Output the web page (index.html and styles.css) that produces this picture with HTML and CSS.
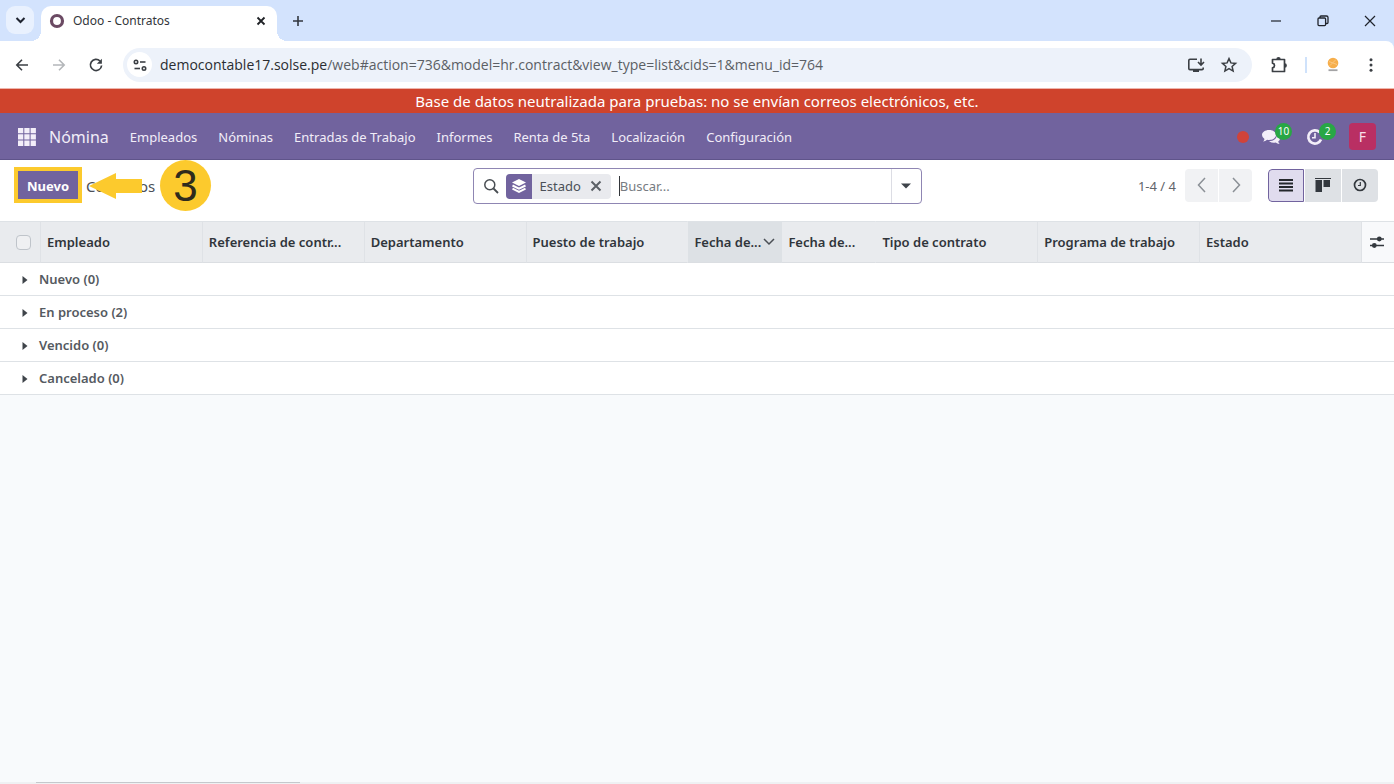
FILE: index.html
```html
<!DOCTYPE html>
<html lang="es">
<head>
<meta charset="utf-8">
<title>Odoo - Contratos</title>
<link rel="stylesheet" href="styles.css">
</head>
<body>
<div class="browser">
  <div class="tabstrip">
    <button class="tab-search" aria-label="Buscar pestañas"><svg width="28" height="28" viewBox="0 0 28 28"><path d="M10.500 12l4 4 4-4" fill="none" stroke="#1f2430" stroke-width="2"/></svg></button>
    <div class="tab">
      <svg width="16" height="16" viewBox="0 0 16 16"><circle cx="8" cy="8" r="5.500" fill="none" stroke="#6b4a63" stroke-width="3.200"/></svg>
      <span class="tab-title">Odoo - Contratos</span>
      <button class="icon-btn" aria-label="Cerrar pestaña"><svg width="16" height="16" viewBox="0 0 16 16"><path d="M4.500 4.500l7 7m0-7l-7 7" stroke="#1f2226" stroke-width="1.800"/></svg></button>
    </div>
    <button class="icon-btn new-tab" aria-label="Nueva pestaña"><svg width="16" height="16" viewBox="0 0 16 16"><path d="M8 3v10M3 8h10" stroke="#33373f" stroke-width="1.600"/></svg></button>
    <div class="window-controls">
      <button class="icon-btn" aria-label="Minimizar"><svg width="16" height="16" viewBox="0 0 16 16"><path d="M3 8h10" stroke="#20242c" stroke-width="1.200"/></svg></button>
      <button class="icon-btn" aria-label="Restaurar"><svg width="16" height="16" viewBox="0 0 16 16"><g fill="none" stroke="#20242c" stroke-width="1.300"><rect x="3" y="5" width="7.600" height="7.600" rx="1"/><path d="M5 5V4q0-1 1-1h5.500q1.500 0 1.500 1.500V9.500q0 1-1 1h-1"/></g></svg></button>
      <button class="icon-btn" aria-label="Cerrar"><svg width="16" height="16" viewBox="0 0 16 16"><path d="M3 3l10 10M13 3L3 13" stroke="#20242c" stroke-width="1.200"/></svg></button>
    </div>
  </div>
  <div class="toolbar">
    <button class="icon-btn" aria-label="Atrás"><svg width="16" height="16" viewBox="0 0 16 16"><path d="M14 8H3M8 2.800L2.800 8 8 13.200" fill="none" stroke="#3b3f44" stroke-width="1.600"/></svg></button>
    <button class="icon-btn" aria-label="Adelante"><svg width="16" height="16" viewBox="0 0 16 16"><path d="M2 8h11M8 2.800L13.200 8 8 13.200" fill="none" stroke="#b4b7ba" stroke-width="1.600"/></svg></button>
    <button class="icon-btn" aria-label="Recargar"><svg width="16" height="16" viewBox="0 0 16 16"><path d="M13.600 8.500A5.600 5.600 0 1 1 12 4" fill="none" stroke="#3b3f44" stroke-width="1.700"/><path d="M13.900 1.700v5.100H8.800z" fill="#3b3f44"/></svg></button>
    <div class="omnibox">
      <button class="site-info" aria-label="Información del sitio"><svg width="16" height="16" viewBox="0 0 16 16"><g fill="none" stroke="#3b3f44" stroke-width="1.600"><circle cx="4" cy="5" r="1.700"/><path d="M8 5h5.500"/><circle cx="12" cy="11.500" r="1.700"/><path d="M2.500 11.500H8"/></g></svg></button>
      <a class="url" href="#"><span class="host">democontable17.solse.pe</span>/web#action=736&amp;model=hr.contract&amp;view_type=list&amp;cids=1&amp;menu_id=764</a>
      <button class="icon-btn" aria-label="Instalar"><svg width="18" height="18" viewBox="0 0 18 18"><path d="M10 3.200H3q-1.200 0-1.200 1.200v8q0 1.200 1.200 1.200h12q1.200 0 1.200-1.200V11.500M14 2.500v6M11 6l3 3 3-3" fill="none" stroke="#3b3f44" stroke-width="1.600"/><path d="M6 14h6v2H6z" fill="#3b3f44"/></svg></button>
      <button class="icon-btn" aria-label="Favorito"><svg width="18" height="18" viewBox="0 0 18 18"><path d="M9 2.600l1.900 4.300 4.700.5-3.500 3.100 1 4.600L9 12.700l-4.100 2.400 1-4.600-3.500-3.100 4.700-.5z" fill="none" stroke="#3b3f44" stroke-width="1.500"/></svg></button>
    </div>
    <button class="icon-btn" aria-label="Extensiones"><svg width="18" height="18" viewBox="0 0 18 18"><path d="M2.500 3.500h12v12h-12v-3.700q2-.4 2-2.300t-2-2.300z" fill="none" stroke="#3b3f44" stroke-width="1.700" stroke-linejoin="round"/><path d="M6.300 3.300a2.200 2.200 0 0 1 4.400 0zM14.700 7.300a2.200 2.200 0 0 1 0 4.400z" fill="#3b3f44"/></svg></button>
    <span class="toolbar-sep"></span>
    <button class="icon-btn" aria-label="Perfil"><svg width="18" height="18" viewBox="0 0 18 18"><circle cx="9" cy="7" r="5.300" fill="#f6ae4b"/><path d="M5 5.500l8 3M6 9.500l6-6" stroke="#fbc77f"/><path d="M4.500 14.200h9" stroke="#a3a3a5" stroke-width="1.800"/></svg></button>
    <button class="icon-btn" aria-label="Menú"><svg width="16" height="16" viewBox="0 0 16 16"><g fill="#3b3f44"><circle cx="8" cy="2.700" r="1.500"/><circle cx="8" cy="8" r="1.500"/><circle cx="8" cy="13.300" r="1.500"/></g></svg></button>
  </div>
</div>

<div class="banner">Base de datos neutralizada para pruebas: no se envían correos electrónicos, etc.</div>

<header class="navbar">
  <button class="icon-btn apps" aria-label="Aplicaciones"><svg width="18" height="18" viewBox="0 0 18 18"><path fill="#f3eef9" d="M0 0h5.300v5.300H0zM6.300 0h5.300v5.300H6.300zM12.600 0h5.300v5.300h-5.300zM0 6.300h5.300v5.300H0zM6.300 6.300h5.300v5.300H6.300zM12.600 6.300h5.300v5.300h-5.300zM0 12.600h5.300v5.300H0zM6.300 12.600h5.300v5.300H6.300zM12.600 12.600h5.300v5.300h-5.300z"/></svg></button>
  <a class="brand" href="#">Nómina</a>
  <nav class="menu">
    <a href="#">Empleados</a><a href="#">Nóminas</a><a href="#">Entradas de Trabajo</a><a href="#">Informes</a><a href="#">Renta de 5ta</a><a href="#">Localización</a><a href="#">Configuración</a>
  </nav>
  <div class="systray">
    <span class="rec"></span>
    <button class="icon-btn tray" aria-label="Mensajes"><svg width="20" height="20" viewBox="0 0 20 20"><path fill="#f3eef9" d="M8 3c4 0 7 2.200 7 5s-3 5-7 5q-1 0-1.900-.2Q4.400 14.200 2 14.500q1.200-1 1.500-2.500Q1 10.400 1 8c0-2.800 3-5 7-5zM16.200 7.500Q19 9 19 11.500q0 1.800-1.800 3.100.3 1.400 1.500 2.400-2.600-.2-4-1.500-4.400.7-6.700-1.300 7.500-.2 8.200-6.700z"/></svg><span class="badge">10</span></button>
    <button class="icon-btn tray" aria-label="Actividades"><svg width="20" height="20" viewBox="0 0 20 20"><path d="M14.500 5.200A6.600 6.600 0 1 0 16 12.500" fill="none" stroke="#f3eef9" stroke-width="2.700"/><path d="M10 6v4.800H7" fill="none" stroke="#f3eef9" stroke-width="1.600"/></svg><span class="badge">2</span></button>
    <button class="avatar">F</button>
  </div>
</header>

<div class="control-panel">
  <div class="cp-left">
    <button class="btn-new">Nuevo</button>
    <span class="crumb">Contratos</span>
    <div class="callout">
      <svg width="53" height="26" viewBox="0 0 53 26"><path d="M0 13L27 0v6h26v14H27v6z" fill="#fcca2d"/></svg>
      <span class="step">3</span>
    </div>
  </div>
  <div class="search">
    <svg class="lens" width="16" height="16" viewBox="0 0 16 16"><circle cx="6.800" cy="6.800" r="5" fill="none" stroke="#484d52" stroke-width="1.500"/><path d="M10.500 10.500l4.500 4.500" stroke="#484d52" stroke-width="1.800"/></svg>
    <div class="facet">
      <span class="facet-icon"><svg width="16" height="16" viewBox="0 0 16 16"><path fill="#fff" d="M8 1l7 3.500L8 8 1 4.500z"/><path d="M1.500 7.500L8 10.700l6.500-3.200M1.500 10.700L8 13.900l6.500-3.200" fill="none" stroke="#fff" stroke-width="2"/></svg></span>
      <span>Estado</span>
      <button class="icon-btn" aria-label="Quitar"><svg width="14" height="14" viewBox="0 0 14 14"><path d="M2.500 2.500l9 9m0-9l-9 9" stroke="#5c6167" stroke-width="2"/></svg></button>
    </div>
    <label class="query"><input type="text" placeholder="Buscar..." aria-label="Buscar"></label>
    <button class="search-toggle" aria-label="Opciones de búsqueda"><svg width="10" height="6" viewBox="0 0 10 6"><path d="M0 .5h10L5 5.500z" fill="#3f444a"/></svg></button>
  </div>
  <div class="cp-right">
    <span class="pager">1-4 / 4</span>
    <div class="group pager-btns">
      <button aria-label="Anterior"><svg width="16" height="16" viewBox="0 0 16 16"><path d="M11 1L4.500 8l6.500 7" fill="none" stroke="#8b9096" stroke-width="1.500"/></svg></button>
      <button aria-label="Siguiente"><svg width="16" height="16" viewBox="0 0 16 16"><path d="M5 1l6.500 7L5 15" fill="none" stroke="#8b9096" stroke-width="1.500"/></svg></button>
    </div>
    <div class="group views">
      <button class="active" aria-label="Lista"><svg width="16" height="16" viewBox="0 0 16 16"><path d="M1 3h14M1 6.500h14M1 10h14M1 13.500h14" stroke="#25282d" stroke-width="2"/></svg></button>
      <button aria-label="Kanban"><svg width="16" height="16" viewBox="0 0 16 16"><path fill="#33383e" d="M0 1h16v1H0zM.5 3h6.500v12H.5zM8.500 3H15v7H8.500z"/></svg></button>
      <button aria-label="Actividad"><svg width="16" height="16" viewBox="0 0 16 16"><circle cx="8" cy="8" r="5.500" fill="none" stroke="#33383e" stroke-width="1.700"/><path d="M8.300 5v3.500H6" fill="none" stroke="#33383e" stroke-width="1.200"/></svg></button>
    </div>
  </div>
</div>

<table class="list">
  <colgroup><col class="c-check"><col><col><col><col><col class="c-date"><col class="c-date"><col><col><col><col class="c-opt"></colgroup>
  <thead>
    <tr>
      <th><input type="checkbox" aria-label="Seleccionar todo"></th>
      <th>Empleado</th><th>Referencia de contr...</th><th>Departamento</th><th class="plain">Puesto de trabajo</th>
      <th class="sorted plain"><div class="sort-head"><span>Fecha de...</span><svg width="12" height="8" viewBox="0 0 12 8"><path d="M1 1l5 5 5-5" fill="none" stroke="#4a4f55" stroke-width="1.500"/></svg></div></th>
      <th class="plain">Fecha de...</th><th>Tipo de contrato</th><th>Programa de trabajo</th><th>Estado</th>
      <th class="opt"><button class="icon-btn" aria-label="Columnas opcionales"><svg width="16" height="16" viewBox="0 0 16 16"><path d="M1 5h14M1 11.500h14" stroke="#33383e" stroke-width="1.300"/><circle cx="10.300" cy="5" r="2.400" fill="#33383e"/><circle cx="5.300" cy="11.500" r="2.400" fill="#33383e"/></svg></button></th>
    </tr>
  </thead>
  <tbody>
    <tr><th colspan="11"><svg class="caret" width="6" height="8" viewBox="0 0 6 8"><path d="M.5 0L5.500 4l-5 4z" fill="#3f444a"/></svg>Nuevo (0)</th></tr>
    <tr><th colspan="11"><svg class="caret" width="6" height="8" viewBox="0 0 6 8"><path d="M.5 0L5.500 4l-5 4z" fill="#3f444a"/></svg>En proceso (2)</th></tr>
    <tr><th colspan="11"><svg class="caret" width="6" height="8" viewBox="0 0 6 8"><path d="M.5 0L5.500 4l-5 4z" fill="#3f444a"/></svg>Vencido (0)</th></tr>
    <tr><th colspan="11"><svg class="caret" width="6" height="8" viewBox="0 0 6 8"><path d="M.5 0L5.500 4l-5 4z" fill="#3f444a"/></svg>Cancelado (0)</th></tr>
  </tbody>
</table>
<footer class="edge"><span class="edge-gap"></span><span class="edge-line"></span></footer>
</body>
</html>
```

FILE: styles.css
```css
* { box-sizing: border-box; }
body {
  margin: 0;
  min-height: 100vh;
  display: flex;
  flex-direction: column;
  background: #f8fafc;
  color: #4b5058;
  font: 13px/20px "Noto Sans", "Open Sans", sans-serif;
}
button, input { font: inherit; color: inherit; margin: 0; }
button { border: 0; padding: 0; background: none; display: flex; align-items: center; justify-content: center; }
a { color: inherit; text-decoration: none; }
svg { display: block; flex: none; }

/* Browser window */
.tabstrip { display: flex; height: 41px; background: #d3e3fd; padding-left: 6px; }
.tab-search { width: 28px; height: 28px; margin-top: 6px; border-radius: 9px; background: #e9f1fe; }
.tab {
  position: relative;
  display: flex;
  align-items: center;
  gap: 8px;
  width: 236px;
  height: 35px;
  margin: 6px 0 0 7px;
  padding: 0 8px 5px;
  border-radius: 10px 10px 0 0;
  background: #fff;
}
.tab::before, .tab::after { content: ""; position: absolute; bottom: 0; width: 10px; height: 10px; }
.tab::before { left: -10px; background: radial-gradient(circle at 0 0, transparent 10px, #fff 10px); }
.tab::after { right: -10px; background: radial-gradient(circle at 100% 0, transparent 10px, #fff 10px); }
.tab-title { flex: 1; font-size: 12px; color: #33363b; }
.new-tab { margin-left: 13px; }
.window-controls { display: flex; gap: 31px; margin-left: auto; padding-right: 16px; }
.browser { background: #d3e3fd; }
.toolbar {
  display: flex;
  align-items: center;
  gap: 21px;
  height: 48px;
  padding: 0 15px 0 14px;
  background: #fff;
  border-bottom: 1px solid #eeb5ac;
  border-top-right-radius: 8px;
}
.omnibox {
  flex: 1;
  display: flex;
  align-items: center;
  gap: 15px;
  height: 34px;
  margin-left: -2px;
  margin-right: -3px;
  padding: 0 14px 0 4px;
  border-radius: 17px;
  background: #edf2fa;
}
.site-info { width: 25px; height: 25px; border-radius: 50%; background: #fff; }
.url { flex: 1; margin-left: -7px; font: 14px/20px "Open Sans", "Noto Sans", sans-serif; color: #5b5f65; white-space: nowrap; }
.host { color: #2a2d31; }
.toolbar-sep { width: 2px; height: 16px; margin: 0 -4px; background: #cfe2fb; }

/* Application bars */
.banner { height: 24px; background: #cf432c; color: #fff; font-size: 15px; line-height: 24px; text-align: center; }
.navbar {
  display: flex;
  align-items: center;
  height: 47px;
  padding: 1px 18px 0;
  background: #71639e;
  border-bottom: 1px solid #5f548a;
  color: #f1edf8;
}
.brand { margin-left: 13px; font-size: 16px; }
.menu { display: flex; gap: 21px; margin-left: 21px; }
.systray { display: flex; align-items: center; margin-left: auto; }
.rec { width: 12px; height: 12px; margin-right: 12px; border-radius: 50%; background: #d0433a; }
.tray { position: relative; margin-right: 24px; }
.badge {
  position: absolute;
  left: 14px;
  top: -4px;
  min-width: 17px;
  height: 17px;
  padding: 0 2px;
  border-radius: 9px;
  background: #28a745;
  color: #fff;
  font-size: 10px;
  line-height: 17px;
}
.avatar { width: 27px; height: 27px; border-radius: 4px; background: #b92f63; color: #f8dfe9; font-size: 14px; }

/* Control panel */
.control-panel {
  display: grid;
  grid-template-columns: 1fr 449px 1fr;
  height: 61px;
  padding: 0 16px;
  background: #fff;
}
.cp-left { position: relative; display: flex; align-items: center; gap: 4px; margin-left: -2px; padding-bottom: 11px; }
.btn-new { height: 36px; padding: 2px 9px 0; border: 4px solid #fcca2d; background: #71639e; color: #fff; font-weight: 700; }
.crumb { padding-top: 2px; font-size: 15px; }
.callout { position: absolute; left: 75px; top: 0; display: flex; align-items: center; gap: 18px; }
.step {
  width: 51px;
  height: 51px;
  border-radius: 50%;
  background: #fcca2d;
  color: #2f2b1d;
  font: 44px/51px "Liberation Sans", sans-serif;
  text-align: center;
}
.search {
  display: flex;
  align-items: center;
  height: 36px;
  margin-top: 8px;
  border: 1px solid #8f86b3;
  border-radius: 4px;
  background: #fff;
}
.lens { margin: 0 7px 0 9px; }
.facet { display: flex; align-items: center; gap: 8px; height: 25px; padding-right: 8px; border-radius: 4px; background: #e9eaee; overflow: hidden; }
.facet-icon { display: flex; align-items: center; justify-content: center; width: 26px; height: 25px; background: #71639e; }
.query { flex: 1; display: flex; margin-left: 8px; border-left: 1px solid #33363b; }
.query input { flex: 1; min-width: 0; height: 20px; padding: 0; border: 0; outline: 0; background: none; }
.query input::placeholder { color: #777c82; opacity: 1; }
.search-toggle { width: 30px; height: 34px; border-left: 1px solid #dcdde4; }
.cp-right { display: flex; align-items: center; justify-content: flex-end; padding-bottom: 11px; }
.pager { margin-right: 9px; padding-top: 2px; color: #5f646a; }
.group { display: flex; gap: 1px; border-radius: 4px; overflow: hidden; }
.group button { width: 33px; height: 33px; }
.pager-btns { margin-right: 16px; }
.pager-btns button { background: #f1f2f4; }
.views button { width: 36px; background: #dee1e5; }
.views .active { border: 1px solid #71639e; border-radius: 4px 0 0 4px; background: #e0dcee; }

/* Grouped list */
.list { width: 100%; table-layout: fixed; border-collapse: separate; border-spacing: 0; background: #fff; }
.c-check { width: 41px; }
.c-date { width: 94px; }
.c-opt { width: 32px; }
.list th { padding: 0 6px; text-align: left; font-weight: 600; }
.list thead th {
  height: 42px;
  border-top: 1px solid #dee2e6;
  border-bottom: 1px solid #dbdee2;
  border-right: 1px solid #dfe2e6;
  background: #e9ebee;
  color: #30353b;
  white-space: nowrap;
  overflow: hidden;
  text-overflow: ellipsis;
}
.list thead .plain { border-right-color: #e9ebee; }
.list thead .sorted { border-right-color: #dde1e5; background: #dde1e5; }
.list thead th:first-child { padding: 0 9px 0 16px; }
.list thead .opt { padding: 0 7px; border-right: 0; background: #f8f9fb; }
.list input { display: block; width: 15px; height: 15px; margin: 0; appearance: none; border: 1px solid #bfc4ca; border-radius: 4px; background: #eff0f2; }
.sort-head { display: flex; align-items: center; justify-content: space-between; }
.list tbody th { height: 33px; padding: 0 22px; border-bottom: 1px solid #dee2e6; color: #555a61; }
.caret { display: inline-block; margin-right: 11px; }

.edge { display: flex; height: 2px; margin-top: auto; background: #eff1f3; }
.edge-gap { width: 36px; }
.edge-line { width: 264px; height: 1px; background: #c5c8cc; }
```
